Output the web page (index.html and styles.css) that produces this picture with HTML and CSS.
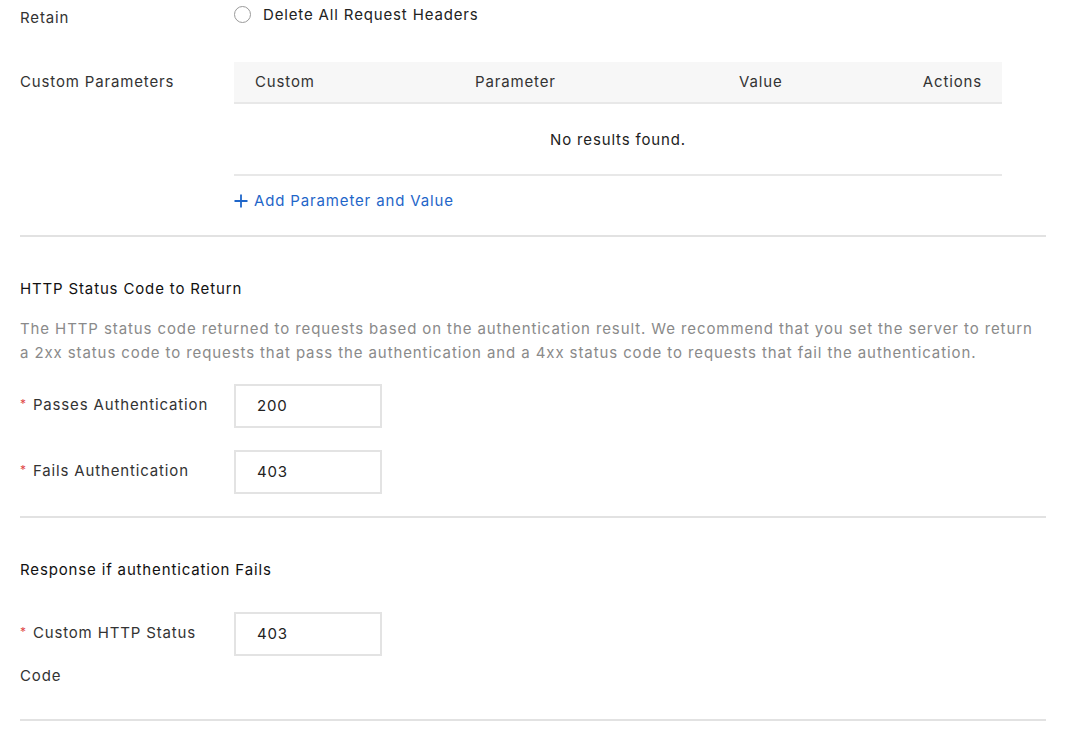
FILE: index.html
```html
<!DOCTYPE html>
<html lang="en">
<head>
<meta charset="utf-8">
<title>Authentication settings</title>
<link rel="stylesheet" href="styles.css">
</head>
<body>
<div class="page">
  <section class="section first">
    <div class="row row-retain">
      <div class="label">Retain</div>
      <div class="control">
        <label class="radio"><span class="radio-dot"></span><span>Delete All Request Headers</span></label>
      </div>
    </div>
    <div class="row row-params">
      <div class="label label-table">Custom Parameters</div>
      <div class="control">
        <div class="table">
          <div class="thead">
            <div class="th c1">Custom</div>
            <div class="th c2">Parameter</div>
            <div class="th c3">Value</div>
            <div class="th c4">Actions</div>
          </div>
          <div class="empty">No results found.</div>
        </div>
        <a class="add-link" href="#"><svg class="plus" width="14" height="14" viewBox="0 0 14 14"><path d="M7 0.5V13.5M0.5 7H13.5" stroke="currentColor" stroke-width="1.8" fill="none"/></svg>Add Parameter and Value</a>
      </div>
    </div>
  </section>

  <section class="section">
    <h3 class="heading">HTTP Status Code to Return</h3>
    <p class="desc">The HTTP status code returned to requests based on the authentication result. We recommend that you set the server to return a 2xx status code to requests that pass the authentication and a 4xx status code to requests that fail the authentication.</p>
    <div class="row field">
      <div class="label"><span class="req">*</span>Passes Authentication</div>
      <div class="control"><div class="input">200</div></div>
    </div>
    <div class="row field">
      <div class="label"><span class="req">*</span>Fails Authentication</div>
      <div class="control"><div class="input">403</div></div>
    </div>
  </section>

  <section class="section">
    <h3 class="heading heading-2">Response if authentication Fails</h3>
    <div class="row field">
      <div class="label label-wrap"><span class="req">*</span>Custom HTTP Status Code</div>
      <div class="control"><div class="input">403</div></div>
    </div>
  </section>
</div>
</body>
</html>
```

FILE: styles.css
```css
* { box-sizing: border-box; }
html, body { margin: 0; padding: 0; background: #fff; }
body {
  font-family: Inter, "Noto Sans", "Liberation Sans", sans-serif;
  font-size: 15px;
  letter-spacing: 0.85px;
  color: #333;
}
.page {
  width: 1026px;
  margin-left: 20px;
}
.section {
  border-bottom: 2px solid #e2e2e2;
  padding-bottom: 22px;
}
.section.first { padding-bottom: 22px; }
.row { display: flex; }
.label {
  width: 214px;
  flex: none;
  line-height: 42px;
  color: #333;
}
.control { flex: 1; }

.row-retain { height: 62px; }
.row-retain .label { line-height: 36px; }
.radio {
  display: flex;
  align-items: center;
  height: 28px;
  gap: 12px;
  color: #222;
}
.radio-dot {
  width: 17px;
  height: 17px;
  border: 1.5px solid #9a9a9a;
  border-radius: 50%;
  display: inline-block;
}

.label-table { line-height: 40px; }
.table { width: 768px; }
.thead {
  display: flex;
  background: #f7f7f7;
  height: 42px;
  border-bottom: 2px solid #e8e8e8;
  align-items: center;
  padding: 0 20px 0 21px;
  color: #333;
}
.th { line-height: 40px; }
.c1 { width: 220px; }
.c2 { width: 264px; }
.c3 { flex: 1; }
.c4 { text-align: right; }
.empty {
  height: 72px;
  border-bottom: 2px solid #e8e8e8;
  display: flex;
  align-items: center;
  justify-content: center;
  color: #222;
}
.add-link {
  display: inline-flex;
  align-items: center;
  gap: 6px;
  margin-top: 13px;
  line-height: 24px;
  color: #1f66c9;
  text-decoration: none;
}
.plus { display: block; }

.heading {
  margin: 0;
  font-size: 15px;
  font-weight: 400;
  color: #111;
  line-height: 24px;
  padding-top: 40px;
}
.desc {
  margin: 16px 0 19px;
  max-width: 1018px;
  line-height: 24px;
  letter-spacing: 0.9px;
  color: #8a8a8a;
}
.field { margin-bottom: 22px; }
.field:last-child { margin-bottom: 0; }
.heading-2 { padding-bottom: 30px; }
.req {
  color: #e04848;
  margin-right: 6px;
  font-size: 12px;
  position: relative;
  top: -2px;
}
.label-wrap { padding-right: 20px; }
.input {
  width: 148px;
  height: 44px;
  border: 2px solid #e3e3e3;
  padding: 0 21px;
  line-height: 40px;
  color: #222;
}
```
